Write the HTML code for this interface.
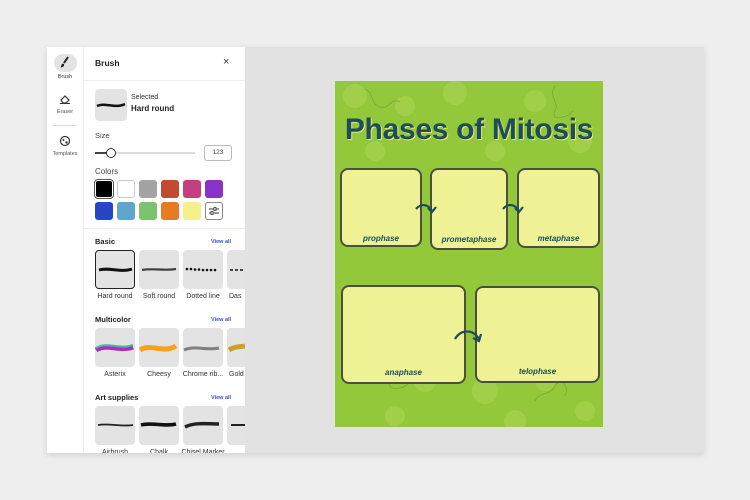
<!DOCTYPE html><html><head><style>
*{margin:0;padding:0;box-sizing:border-box}
body{width:750px;height:500px;background:#eeeeee;font-family:"Liberation Sans",sans-serif;position:relative;overflow:hidden}
.a{position:absolute}
.app{left:47px;top:47px;width:657px;height:406px;background:#e2e2e2;box-shadow:0 2px 6px rgba(0,0,0,.12)}
.rail{left:47px;top:47px;width:37px;height:406px;background:#fff;border-right:1px solid #eee}
.panel{left:84px;top:47px;width:161px;height:406px;background:#fff;overflow:hidden}
.t{font-size:6px;color:#333;text-align:center}
.sw{width:18px;height:18px;border-radius:3px}
.tile{width:40px;height:39px;background:#e3e3e3;border-radius:4px}
.lbl{font-size:7px;color:#333;width:48px;text-align:center}
.hd{font-size:7.5px;font-weight:bold;color:#222}
.va{font-size:5.5px;color:#3b4fd6;font-weight:bold}
.box{background:#eef294;border:2px solid #4a4f3f;border-radius:8px}
.bl{font-family:"Liberation Sans",sans-serif;font-style:italic;font-weight:bold;font-size:8px;color:#1d4d5a;position:absolute;width:100%;text-align:center}
</style></head><body>
<div class="a app"></div>
<div class="a rail">
 <div class="a" style="left:7px;top:7px;width:23px;height:18px;border-radius:9px;background:#e3e3e3"></div>
 <svg class="a" style="left:12px;top:9px" width="12" height="13" viewBox="0 0 12 13"><path d="M9 1L5 7" stroke="#222" stroke-width="2"/><path d="M4 7.5C2 8 2.5 10 1.5 11.5C4 11.5 5.5 10 5 8Z" fill="#222"/></svg>
 <div class="a t" style="left:0;top:27px;width:36px;font-size:5.5px">Brush</div>
 <svg class="a" style="left:12px;top:47px" width="12" height="10" viewBox="0 0 12 10"><path d="M2 6L6 2L10 6L7 9H4Z" fill="none" stroke="#333" stroke-width="1.2"/><path d="M1 9.5H11" stroke="#333"/></svg>
 <div class="a t" style="left:0;top:62px;width:36px;font-size:5.5px;color:#555">Eraser</div>
 <div class="a" style="left:6px;top:78px;width:24px;height:1px;background:#ddd"></div>
 <svg class="a" style="left:12px;top:88px" width="12" height="12" viewBox="0 0 12 12"><circle cx="6" cy="6" r="4.5" fill="none" stroke="#333" stroke-width="1.2"/><circle cx="4.5" cy="5" r="1" fill="#333"/><circle cx="7.5" cy="7.5" r="1.2" fill="#333"/></svg>
 <div class="a t" style="left:0;top:104px;width:36px;font-size:5.5px;color:#555">Templates</div>
</div>
<div class="a panel">
 <div class="a hd" style="left:11px;top:11px;font-size:8.5px">Brush</div>
 <div class="a" style="left:139px;top:9px;font-size:11px;color:#333">×</div>
 <div class="a" style="left:0;top:33px;width:161px;height:1px;background:#eee"></div>
 <div class="a" style="left:11px;top:42px;width:32px;height:32px;background:#e3e3e3;border-radius:4px"></div>
 <svg class="a" style="left:11px;top:42px" width="32" height="32"><path d="M2 17C10 13 20 20 30 15" stroke="#111" stroke-width="2.5" fill="none"/></svg>
 <div class="a" style="left:47px;top:47px;font-size:7px;color:#333">Selected</div>
 <div class="a hd" style="left:47px;top:57px;font-size:8px">Hard round</div>
 <div class="a" style="left:11px;top:84px;font-size:7.5px;color:#444">Size</div>
 <div class="a" style="left:11px;top:105px;width:100px;height:2px;background:#ddd"></div>
 <div class="a" style="left:11px;top:105px;width:16px;height:2px;background:#444"></div>
 <div class="a" style="left:22px;top:101px;width:10px;height:10px;border-radius:50%;border:1.5px solid #333;background:#fff"></div>
 <div class="a" style="left:120px;top:98px;width:28px;height:16px;border:1px solid #bbb;border-radius:3px;font-size:6.5px;color:#444;text-align:center;line-height:14px">123</div>
 <div class="a" style="left:11px;top:120px;font-size:8px;color:#444">Colors</div>
 <div class="a sw" style="left:11px;top:133px;background:#000;outline:1.5px solid #555;outline-offset:0;border:1.5px solid #fff"></div>
 <div class="a sw" style="left:33px;top:133px;background:#fff;border:1px solid #ccc"></div>
 <div class="a sw" style="left:55px;top:133px;background:#a3a3a3"></div>
 <div class="a sw" style="left:77px;top:133px;background:#c24a32"></div>
 <div class="a sw" style="left:99px;top:133px;background:#c23f80"></div>
 <div class="a sw" style="left:121px;top:133px;background:#8733c7"></div>
 <div class="a sw" style="left:11px;top:155px;background:#2745c4"></div>
 <div class="a sw" style="left:33px;top:155px;background:#5ea6cc"></div>
 <div class="a sw" style="left:55px;top:155px;background:#79c46c"></div>
 <div class="a sw" style="left:77px;top:155px;background:#e77a24"></div>
 <div class="a sw" style="left:99px;top:155px;background:#f6f088"></div>
 <div class="a sw" style="left:121px;top:155px;background:#fff;border:1px solid #888"></div>
 <svg class="a" style="left:124px;top:159px" width="12" height="10"><path d="M1 3H11M1 7H11" stroke="#333"/><rect x="6" y="1.5" width="2" height="3" fill="#fff" stroke="#333" stroke-width=".8"/><rect x="3" y="5.5" width="2" height="3" fill="#fff" stroke="#333" stroke-width=".8"/></svg>
 <div class="a" style="left:0;top:181px;width:161px;height:1px;background:#eee"></div>

 <div class="a hd" style="left:11px;top:190px">Basic</div><div class="a va" style="left:127px;top:192px">View all</div>
 <div class="a tile" style="left:11px;top:203px;border:1.5px solid #222"></div>
 <div class="a tile" style="left:55px;top:203px"></div>
 <div class="a tile" style="left:99px;top:203px"></div>
 <div class="a tile" style="left:143px;top:203px"></div>
 <svg class="a" style="left:11px;top:203px" width="161" height="40">
  <path d="M4 20C14 17 26 23 37 19" stroke="#111" stroke-width="3" fill="none"/>
  <path d="M47 20C58 18 70 21 81 19" stroke="#222" stroke-width="2.2" fill="none" opacity=".85"/>
  <g fill="#111"><circle cx="92" cy="19" r="1.3"/><circle cx="96" cy="19" r="1.3"/><circle cx="100" cy="19.5" r="1.3"/><circle cx="104" cy="19.5" r="1.3"/><circle cx="108" cy="20" r="1.3"/><circle cx="112" cy="20" r="1.3"/><circle cx="116" cy="20" r="1.3"/><circle cx="120" cy="20" r="1.3"/></g>
  <path d="M135 20H150" stroke="#111" stroke-width="1.6" stroke-dasharray="3 2"/>
 </svg>
 <div class="a lbl" style="left:7px;top:246px">Hard round</div>
 <div class="a lbl" style="left:51px;top:246px">Soft round</div>
 <div class="a lbl" style="left:95px;top:246px">Dotted line</div>
 <div class="a lbl" style="left:139px;top:246px;text-align:left;padding-left:6px">Das</div>

 <div class="a hd" style="left:11px;top:268px">Multicolor</div><div class="a va" style="left:127px;top:270px">View all</div>
 <div class="a tile" style="left:11px;top:281px"></div>
 <div class="a tile" style="left:55px;top:281px"></div>
 <div class="a tile" style="left:99px;top:281px"></div>
 <div class="a tile" style="left:143px;top:281px"></div>
 <svg class="a" style="left:11px;top:281px" width="161" height="40">
  <path d="M1 22C12 15 24 24 38 19" stroke="#b02fb0" stroke-width="5" fill="none"/>
  <path d="M1 20C12 13 24 22 38 17" stroke="#3fb6b6" stroke-width="2" fill="none"/>
  <path d="M45 22C56 15 68 26 81 18" stroke="#f5a21d" stroke-width="5" fill="none"/>
  <path d="M89 22C100 17 110 23 124 20" stroke="#555" stroke-width="3" fill="none" opacity=".7"/>
  <path d="M134 22C140 18 146 19 150 18" stroke="#c9a12a" stroke-width="5" fill="none"/>
 </svg>
 <div class="a lbl" style="left:7px;top:324px">Asterix</div>
 <div class="a lbl" style="left:51px;top:324px">Cheesy</div>
 <div class="a lbl" style="left:95px;top:324px">Chrome rib...</div>
 <div class="a lbl" style="left:139px;top:324px;text-align:left;padding-left:6px">Gold</div>

 <div class="a hd" style="left:11px;top:346px">Art supplies</div><div class="a va" style="left:127px;top:348px">View all</div>
 <div class="a tile" style="left:11px;top:359px"></div>
 <div class="a tile" style="left:55px;top:359px"></div>
 <div class="a tile" style="left:99px;top:359px"></div>
 <div class="a tile" style="left:143px;top:359px"></div>
 <svg class="a" style="left:11px;top:359px" width="161" height="40">
  <path d="M3 19C14 17 26 21 38 19" stroke="#222" stroke-width="1.8" fill="none"/>
  <path d="M46 19C57 16 70 21 81 18" stroke="#111" stroke-width="3.5" fill="none"/>
  <path d="M90 21C100 16 112 18 124 18" stroke="#222" stroke-width="3.5" fill="none"/>
  <path d="M136 19H150" stroke="#222" stroke-width="2" fill="none"/>
 </svg>
 <div class="a lbl" style="left:7px;top:402px">Airbrush</div>
 <div class="a lbl" style="left:51px;top:402px">Chalk</div>
 <div class="a lbl" style="left:95px;top:402px">Chisel Marker</div>
</div>

<div class="a" style="left:335px;top:81px;width:268px;height:346px;background:#93c83a;overflow:hidden">
 <svg class="a" style="left:0;top:0" width="268" height="346">
  <g fill="#c3e070" opacity=".3">
   <circle cx="20" cy="15" r="12"/><circle cx="70" cy="25" r="10"/><circle cx="120" cy="12" r="12"/><circle cx="200" cy="20" r="11"/><circle cx="245" cy="60" r="12"/><circle cx="40" cy="70" r="10"/><circle cx="160" cy="70" r="10"/><circle cx="230" cy="120" r="9"/>
   <circle cx="30" cy="290" r="12"/><circle cx="90" cy="300" r="11"/><circle cx="150" cy="310" r="13"/><circle cx="210" cy="300" r="10"/><circle cx="60" cy="335" r="10"/><circle cx="180" cy="340" r="11"/><circle cx="250" cy="330" r="10"/>
  </g>
  <g fill="none" stroke="#5c8a2c" stroke-width=".8" opacity=".5">
   <path d="M30 8c10 5 5 15 15 18s10-10 20-5"/><path d="M220 5c-8 10 5 15 0 25s12 8 18 0"/><path d="M20 290c10-10 20 5 25-5s15 5 10 15s15 10 20 0"/><path d="M200 320c5-10 15-5 20-15s15 0 10 10"/>
  </g>
 </svg>
 <div class="a" style="left:0;top:32px;width:268px;text-align:center;font-size:30px;font-weight:bold;color:#1d4d5a;letter-spacing:-.3px;text-shadow:1px 1px 0 #e9e27a">Phases of Mitosis</div>
 <div class="a box" style="left:5px;top:87px;width:82px;height:79px"><div class="bl" style="bottom:2px">prophase</div></div>
 <div class="a box" style="left:95px;top:87px;width:78px;height:82px"><div class="bl" style="bottom:4px">prometaphase</div></div>
 <div class="a box" style="left:182px;top:87px;width:83px;height:80px"><div class="bl" style="bottom:3px">metaphase</div></div>
 <div class="a box" style="left:6px;top:204px;width:125px;height:99px"><div class="bl" style="bottom:5px">anaphase</div></div>
 <div class="a box" style="left:140px;top:205px;width:125px;height:97px"><div class="bl" style="bottom:5px">telophase</div></div>
 <svg class="a" style="left:0;top:0" width="268" height="346">
  <g fill="none" stroke="#1d4d5a" stroke-width="2.2">
   <path d="M81 128c5-6 12-5 16 2"/><path d="M93 127l4 4l4-5"/>
   <path d="M168 128c5-6 12-5 16 2"/><path d="M180 127l4 4l4-5"/>
   <path d="M120 258c6-10 18-10 24 0"/><path d="M138 257l6 3l2-7"/>
  </g>
 </svg>
</div>
</body></html>
